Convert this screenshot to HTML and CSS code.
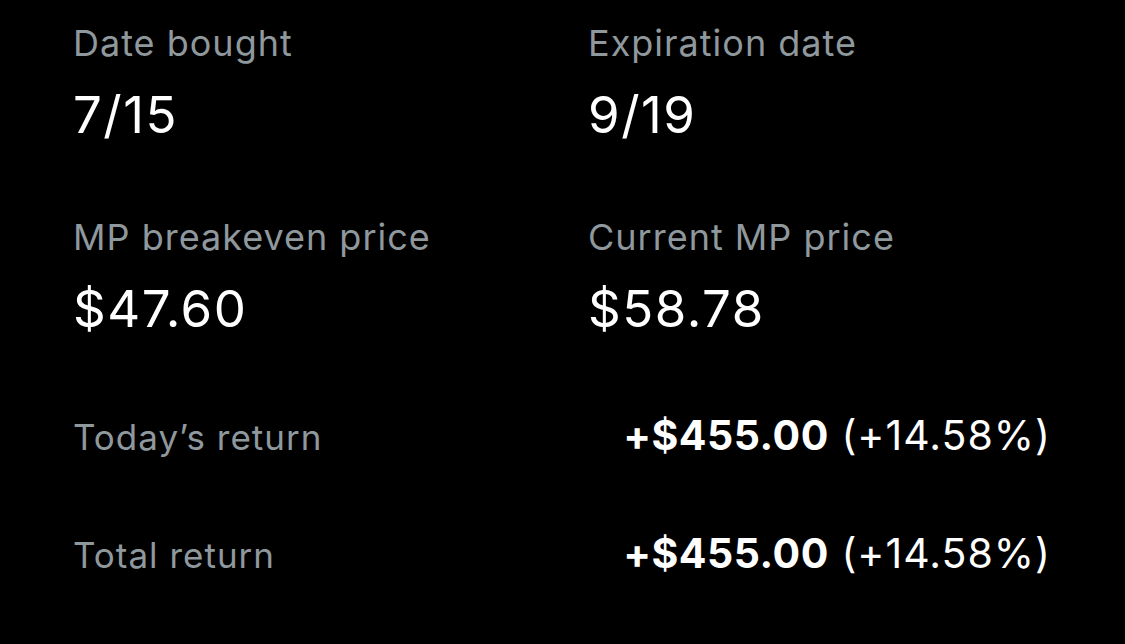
FILE: index.html
```html
<!DOCTYPE html>
<html lang="en">
<head>
<meta charset="utf-8">
<title>Position details</title>
<link rel="stylesheet" href="styles.css">
</head>
<body>
<main class="details">
  <section class="grid">
    <div class="cell">
      <div class="label">Date bought</div>
      <div class="value">7/15</div>
    </div>
    <div class="cell">
      <div class="label">Expiration date</div>
      <div class="value">9/19</div>
    </div>
    <div class="cell">
      <div class="label">MP breakeven price</div>
      <div class="value">$47.60</div>
    </div>
    <div class="cell">
      <div class="label">Current MP price</div>
      <div class="value">$58.78</div>
    </div>
  </section>
  <section class="returns">
    <div class="row">
      <span class="label">Today’s return</span>
      <span class="amount"><b>+$455.00</b> (+14.58%)</span>
    </div>
    <div class="row">
      <span class="label">Total return</span>
      <span class="amount"><b>+$455.00</b> (+14.58%)</span>
    </div>
  </section>
</main>
</body>
</html>
```
FILE: styles.css
```css
html, body {
  margin: 0;
  background: #000;
  height: 100%;
}

body {
  font-family: Inter, "Noto Sans", sans-serif;
  color: #fff;
}

.details {
  padding: 14px 74px 0 73px;
}

.grid {
  display: grid;
  grid-template-columns: 515px 1fr;
  row-gap: 50px;
}

.label {
  color: #8f989d;
  font-size: 36px;
  letter-spacing: 1px;
  line-height: 58px;
}

.value {
  font-size: 51px;
  letter-spacing: 1.5px;
  line-height: 86px;
}

.returns {
  display: flex;
  flex-direction: column;
  gap: 54px;
  margin-top: 51px;
}

.row {
  display: flex;
  justify-content: space-between;
  align-items: baseline;
  line-height: 64px;
}

.row .label {
  font-size: 35px;
}

.amount {
  font-size: 41px;
  letter-spacing: 1px;
  color: #fff;
}

.amount b {
  font-weight: 700;
  letter-spacing: 0.5px;
}
```
